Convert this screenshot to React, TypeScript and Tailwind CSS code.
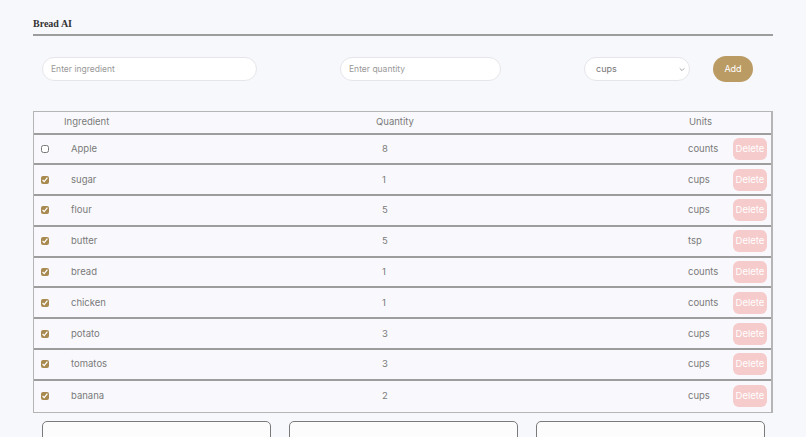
import { useState } from "react";

type Item = {
  id: number;
  name: string;
  quantity: number;
  unit: string;
  checked: boolean;
};

const initialItems: Item[] = [
  { id: 1, name: "Apple", quantity: 8, unit: "counts", checked: false },
  { id: 2, name: "sugar", quantity: 1, unit: "cups", checked: true },
  { id: 3, name: "flour", quantity: 5, unit: "cups", checked: true },
  { id: 4, name: "butter", quantity: 5, unit: "tsp", checked: true },
  { id: 5, name: "bread", quantity: 1, unit: "counts", checked: true },
  { id: 6, name: "chicken", quantity: 1, unit: "counts", checked: true },
  { id: 7, name: "potato", quantity: 3, unit: "cups", checked: true },
  { id: 8, name: "tomatos", quantity: 3, unit: "cups", checked: true },
  { id: 9, name: "banana", quantity: 2, unit: "cups", checked: true },
];

export default function App() {
  const [items, setItems] = useState<Item[]>(initialItems);
  const [unit, setUnit] = useState("cups");

  const toggle = (id: number) =>
    setItems((prev) => prev.map((i) => (i.id === id ? { ...i, checked: !i.checked } : i)));

  return (
    <div className="min-h-screen bg-[#f7f8fc] text-[#7a7a7a] font-['Inter','Roboto',sans-serif] overflow-hidden relative">
      <div className="px-[33px] pt-[18px]">
        {/* Header */}
        <div className="border-b-2 border-[#9d9d9d] pb-[4px]">
          <h1 className="font-['Liberation_Serif',serif] font-bold text-[10px] text-[#333] leading-[12px]">Bread AI</h1>
        </div>

        {/* Add form */}
        <div className="flex items-center mt-[20px] pl-[9px] h-[26px]">
          <input
            placeholder="Enter ingredient"
            className="w-[215px] h-[24px] rounded-full border border-[#e6e6ea] bg-white px-[8px] text-[8.5px] placeholder:text-[#999] outline-none"
          />
          <input
            placeholder="Enter quantity"
            className="ml-[83px] w-[161px] h-[24px] rounded-full border border-[#e6e6ea] bg-white px-[8px] text-[8.5px] placeholder:text-[#999] outline-none"
          />
          <div className="ml-[83px] relative w-[106px] h-[24px]">
            <select
              value={unit}
              onChange={(e) => setUnit(e.target.value)}
              className="block appearance-none w-full h-[24px] rounded-full border border-[#e6e6ea] bg-white pl-[11px] text-[9px] text-[#777] outline-none"
            >
              <option>cups</option>
              <option>tsp</option>
              <option>counts</option>
            </select>
            <svg className="absolute right-[5px] top-[10px] w-[6px] h-[5px]" viewBox="0 0 6 4" fill="none">
              <path d="M0.7 0.8L3 3.1L5.3 0.8" stroke="#999" strokeWidth="0.9" />
            </svg>
          </div>
          <button className="ml-[23px] w-[40px] h-[26px] rounded-full bg-[#bb9b64] text-white text-[9px]">Add</button>
        </div>

        {/* Table */}
        <div className="mt-[29px] border border-[#b5b5b5] border-r-2 bg-[#f9f9fd] text-[9.5px]">
          <div className="flex items-center h-[22.5px] border-b-2 border-[#9d9d9d]">
            <div className="w-[30px]" />
            <div className="w-[312px]">Ingredient</div>
            <div className="w-[313px]">Quantity</div>
            <div>Units</div>
          </div>
          {items.map((item, idx) => (
            <div
              key={item.id}
              className={`flex items-center h-[30.8px] ${idx < items.length - 1 ? "border-b-2 border-[#9d9d9d]" : ""}`}
            >
              <div className="w-[30px] flex pl-[7px]">
                <input
                  type="checkbox"
                  checked={item.checked}
                  onChange={() => toggle(item.id)}
                  className="w-[8px] h-[8px] m-0 accent-[#a8894f]"
                />
              </div>
              <div className="w-[318px] pl-[7px]">{item.name}</div>
              <div className="w-[306px]">{item.quantity}</div>
              <div className="w-[45px]">{item.unit}</div>
              <button className="w-[34px] h-[22px] rounded-md bg-[#f6cbcb] text-white text-[9.5px]">Delete</button>
            </div>
          ))}
        </div>

        {/* Bottom cards */}
        <div className="flex gap-[18px] mt-[8px] pl-[9px]">
          <div className="w-[229px] h-[40px] rounded-t-[5px] border border-[#7a7a7a] bg-[#fcfcfc]" />
          <div className="w-[229px] h-[40px] rounded-t-[5px] border border-[#7a7a7a] bg-[#fcfcfc]" />
          <div className="w-[229px] h-[40px] rounded-t-[5px] border border-[#7a7a7a] bg-[#fcfcfc]" />
        </div>
      </div>
      <div className="pointer-events-none absolute left-0 right-0 bottom-0 h-[24px] bg-gradient-to-b from-transparent to-black/15" />
    </div>
  );
}
